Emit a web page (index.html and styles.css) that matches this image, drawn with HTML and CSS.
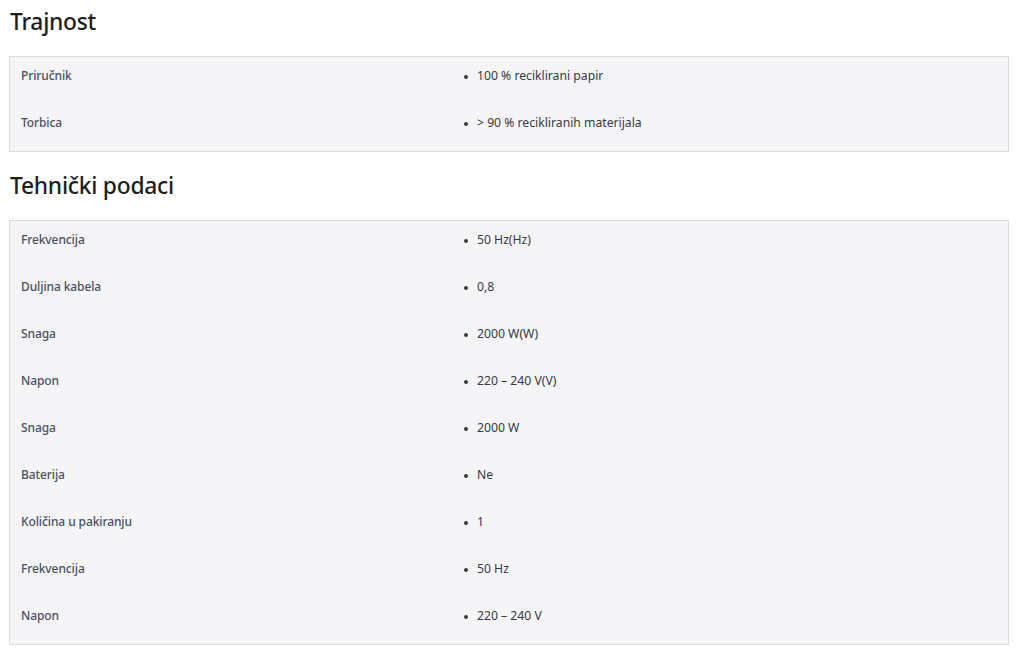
FILE: index.html
```html
<!DOCTYPE html>
<html lang="hr">
<head>
<meta charset="utf-8">
<link rel="stylesheet" href="styles.css">
</head>
<body>
<section class="section">
  <h2 class="title">Trajnost</h2>
  <div class="table">
    <div class="row"><div class="label">Priručnik</div><ul class="value"><li>100 % reciklirani papir</li></ul></div>
    <div class="row"><div class="label">Torbica</div><ul class="value"><li>&gt; 90 % recikliranih materijala</li></ul></div>
  </div>
</section>
<section class="section">
  <h2 class="title">Tehnički podaci</h2>
  <div class="table">
    <div class="row"><div class="label">Frekvencija</div><ul class="value"><li>50 Hz(Hz)</li></ul></div>
    <div class="row"><div class="label">Duljina kabela</div><ul class="value"><li>0,8</li></ul></div>
    <div class="row"><div class="label">Snaga</div><ul class="value"><li>2000 W(W)</li></ul></div>
    <div class="row"><div class="label">Napon</div><ul class="value"><li>220 – 240 V(V)</li></ul></div>
    <div class="row"><div class="label">Snaga</div><ul class="value"><li>2000 W</li></ul></div>
    <div class="row"><div class="label">Baterija</div><ul class="value"><li>Ne</li></ul></div>
    <div class="row"><div class="label">Količina u pakiranju</div><ul class="value"><li>1</li></ul></div>
    <div class="row"><div class="label">Frekvencija</div><ul class="value"><li>50 Hz</li></ul></div>
    <div class="row"><div class="label">Napon</div><ul class="value"><li>220 – 240 V</li></ul></div>
  </div>
</section>
</body>
</html>
```
FILE: styles.css
```css
html, body {
  margin: 0;
  padding: 0;
  background: #ffffff;
}
body {
  padding: 8px 15px 0 9px;
  font-family: "Noto Sans", "Open Sans", sans-serif;
  display: flex;
  flex-direction: column;
  gap: 20px;
}
.section {
  display: flex;
  flex-direction: column;
  gap: 20px;
}
.title {
  margin: 0 0 0 1px;
  font-size: 22.8px;
  line-height: 28px;
  font-weight: 500;
  color: #1e1e1e;
  letter-spacing: -0.25px;
}
.table {
  border: 1px solid #dcdcdc;
  background: #f5f5f7;
  width: 998px;
}
.row {
  display: grid;
  grid-template-columns: 443px 1fr;
  height: 47px;
  box-sizing: border-box;
  padding: 10px 11px 0 11px;
}
.label {
  font-size: 12px;
  line-height: 18px;
  font-weight: 500;
  color: #4b4f62;
  letter-spacing: -0.1px;
}
.value {
  margin: 0;
  padding: 0;
  list-style: none;
}
.value li {
  position: relative;
  padding-left: 13px;
  font-size: 12.2px;
  line-height: 18px;
  color: #363944;
}
.value li::before {
  content: "";
  position: absolute;
  left: 0;
  top: 8px;
  width: 4px;
  height: 4px;
  border-radius: 50%;
  background: #3a3a3a;
}
```
